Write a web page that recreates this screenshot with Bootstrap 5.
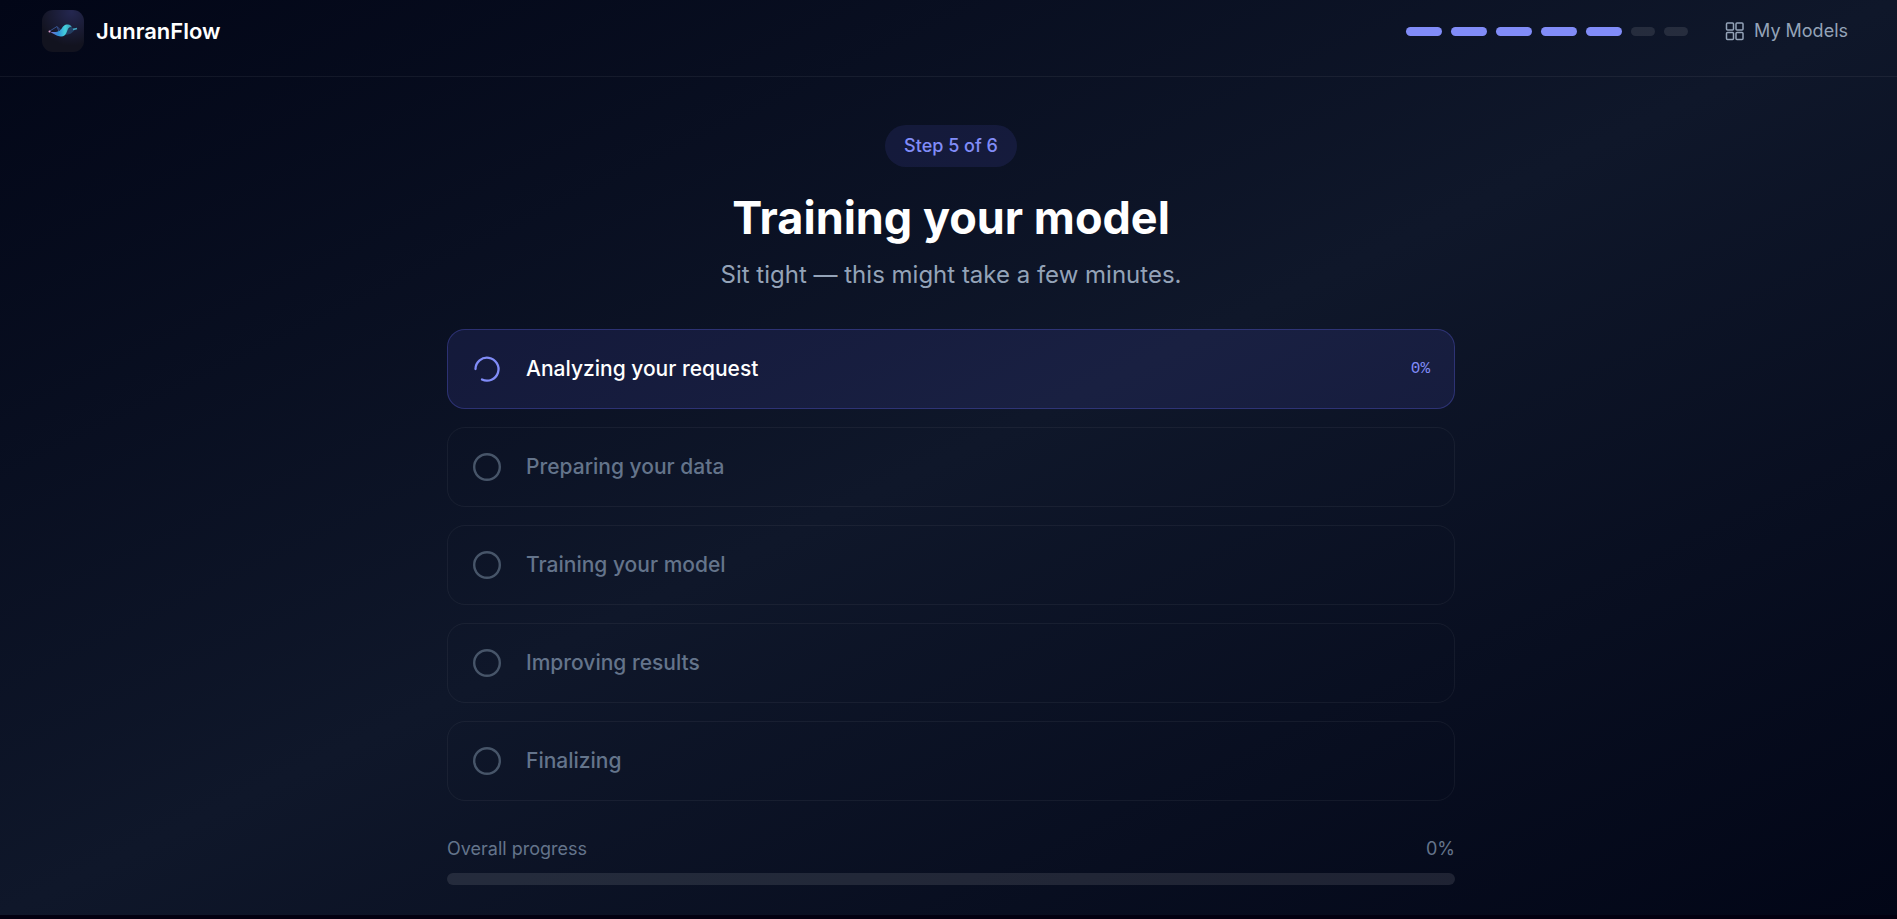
<!DOCTYPE html>
<html lang="en">
<head>
<meta charset="utf-8">
<meta name="viewport" content="width=device-width, initial-scale=1">
<title>JunranFlow</title>
<link rel="stylesheet" href="https://cdn.jsdelivr.net/npm/bootstrap@5.3.0/dist/css/bootstrap.min.css">
<style>
  body {
    font-family: Inter, "Liberation Sans", sans-serif;
    font-size: 18px;
    line-height: 27px;
    color: #94a3b8;
    background: #020010;
  }
  .app-shell { background: linear-gradient(to bottom right, #020617, #0f172a, #020617); min-height: calc(100vh - 4px); }
  .app-header { padding: 10px 49px 24px 42px; border-bottom: 1px solid rgba(255,255,255,.06); }
  .brand-link { gap: 12px; color: #fff; font-size: 22px; font-weight: 600; line-height: 24px; }
  .app-header nav { gap: 37px; }
  .step-track { gap: 9px; }
  .step-dot { width: 24px; height: 9px; border-radius: 9px; background: rgba(255,255,255,.1); }
  .step-dot.done { width: 36px; background: #818cf8; }
  .models-link { gap: 9px; color: #94a3b8; line-height: 26px; }
  .app-main { padding: 48px 0 0 5px; }
  .app-column { max-width: 1008px; }
  .step-pill { padding: 8px 19px; line-height: 26px; background: rgba(99,102,241,.12); color: #818cf8; font-weight: 500; }
  .page-title { font-size: 45px; line-height: 54px; font-weight: 700; color: #fff; margin: 24px 0 12px; }
  .page-lead { font-size: 24px; line-height: 36px; margin-bottom: 36px; }
  .stage-list { gap: 18px; margin-bottom: 34px; }
  .stage { min-height: 80px; padding: 0 24px; gap: 24px; font-size: 21px; line-height: 26px; font-weight: 500; color: #64748b; border: 1px solid rgba(255,255,255,.05); border-radius: 18px; }
  .stage.active { color: #fff; background: rgba(99,102,241,.12); border-color: rgba(99,102,241,.3); }
  .stage-pct { font: 400 16px/24px "Liberation Mono", monospace; color: #818cf8; }
  .overall { color: #64748b; margin-bottom: 11px; }
  .overall-bar { --bs-progress-height: 12px; --bs-progress-bg: rgba(255,255,255,.1); --bs-progress-border-radius: 6px; }
</style>
</head>
<body>
<div class="app-shell">
  <header class="app-header d-flex justify-content-between align-items-center">
    <a href="#" class="brand-link d-flex align-items-center text-decoration-none">
      <svg width="42" height="42" viewBox="0 0 42 42" aria-hidden="true">
        <defs>
          <radialGradient id="tile" cx=".7" cy=".05" r=".8"><stop offset="0" stop-color="#242750"/><stop offset="1" stop-color="#12131f"/></radialGradient>
          <linearGradient id="wave" x1="0" x2="1"><stop offset="0" stop-color="#8a6bd0"/><stop offset=".4" stop-color="#2f8fd8"/><stop offset=".7" stop-color="#43d0dc"/><stop offset="1" stop-color="#3a8fae"/></linearGradient>
        </defs>
        <rect width="42" height="42" rx="11" fill="url(#tile)"/>
        <path d="M7 21.500l8-5 5 5M15 16.500l2 5" fill="none" stroke="#35508c" stroke-width="1"/>
        <path d="M22 25c3-7 7-9 12-6-3 2-4 6-12 6z" fill="#24476e" opacity=".8"/>
        <path d="M7 21.500c5 1 9 1 12-2 2-3 3-5 7-5 2 0 3 1 4 3-3-1-4 1-5 4-1 3-3 5-6 5-4 0-7-3-12-5z" fill="url(#wave)"/>
        <path d="M31 19.500l4-1" stroke="#43a7c0" stroke-width="1.500"/>
        <circle cx="7.500" cy="21.500" r="1" fill="#d99cc9"/>
      </svg>
      <span>JunranFlow</span>
    </a>
    <nav class="d-flex align-items-center" aria-label="Main">
      <div class="step-track d-flex" role="img" aria-label="Step 5">
        <span class="step-dot done"></span><span class="step-dot done"></span><span class="step-dot done"></span><span class="step-dot done"></span><span class="step-dot done"></span><span class="step-dot"></span><span class="step-dot"></span>
      </div>
      <a href="#" class="models-link d-flex align-items-center text-decoration-none">
        <svg width="20" height="20" viewBox="0 0 20 20" fill="none" stroke="currentColor" stroke-width="1.500" aria-hidden="true"><rect x="1.500" y="2" width="7" height="7" rx="1"/><rect x="11" y="2" width="7" height="7" rx="1"/><rect x="1.500" y="11.500" width="7" height="7" rx="1"/><rect x="11" y="11.500" width="7" height="7" rx="1"/></svg>
        <span>My Models</span>
      </a>
    </nav>
  </header>
  <main class="app-main">
    <div class="app-column mx-auto">
      <div class="text-center">
        <span class="step-pill d-inline-block rounded-pill">Step 5 of 6</span>
        <h1 class="page-title">Training your model</h1>
        <p class="page-lead">Sit tight — this might take a few minutes.</p>
      </div>
      <ul class="stage-list list-unstyled d-flex flex-column">
        <li class="stage active d-flex align-items-center">
          <svg width="30" height="30" viewBox="0 0 30 30" fill="none" stroke="#818cf8" stroke-width="2.300" stroke-linecap="round" aria-hidden="true"><path d="M3.500 15A11.500 11.500 0 1 1 10 25.500"/></svg>
          <span class="flex-grow-1">Analyzing your request</span><span class="stage-pct">0%</span>
        </li>
        <li class="stage d-flex align-items-center"><svg width="30" height="30" viewBox="0 0 30 30" aria-hidden="true"><circle cx="15" cy="15" r="12.800" fill="none" stroke="#475569" stroke-width="2.400"/></svg><span>Preparing your data</span></li>
        <li class="stage d-flex align-items-center"><svg width="30" height="30" viewBox="0 0 30 30" aria-hidden="true"><circle cx="15" cy="15" r="12.800" fill="none" stroke="#475569" stroke-width="2.400"/></svg><span>Training your model</span></li>
        <li class="stage d-flex align-items-center"><svg width="30" height="30" viewBox="0 0 30 30" aria-hidden="true"><circle cx="15" cy="15" r="12.800" fill="none" stroke="#475569" stroke-width="2.400"/></svg><span>Improving results</span></li>
        <li class="stage d-flex align-items-center"><svg width="30" height="30" viewBox="0 0 30 30" aria-hidden="true"><circle cx="15" cy="15" r="12.800" fill="none" stroke="#475569" stroke-width="2.400"/></svg><span>Finalizing</span></li>
      </ul>
      <div class="overall d-flex justify-content-between"><span>Overall progress</span><span>0%</span></div>
      <div class="progress overall-bar" role="progressbar" aria-label="Overall progress" aria-valuenow="0" aria-valuemin="0" aria-valuemax="100"><div class="progress-bar" style="width: 0%"></div></div>
    </div>
  </main>
</div>
<script src="https://cdn.jsdelivr.net/npm/bootstrap@5.3.0/dist/js/bootstrap.bundle.min.js"></script>
</body>
</html>
